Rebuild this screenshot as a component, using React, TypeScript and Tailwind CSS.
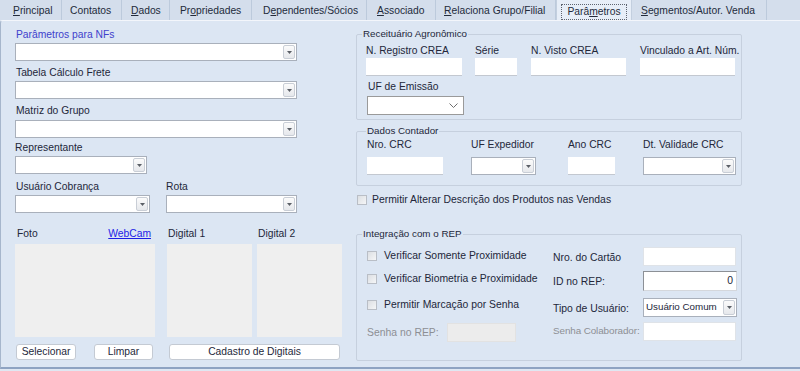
import React from 'react';

type Tab = { pre: string; mn?: string; post?: string; w: string; pl: string; active?: boolean };

const tabs: Tab[] = [
  { pre: '', mn: 'P', post: 'rincipal', w: 'w-[62px]', pl: 'pl-[13px]' },
  { pre: 'Contatos', w: 'w-[60px]', pl: 'pl-[8px]' },
  { pre: '', mn: 'D', post: 'ados', w: 'w-[48px]', pl: 'pl-[9px]' },
  { pre: 'Pr', mn: 'o', post: 'priedades', w: 'w-[82px]', pl: 'pl-[10px]' },
  { pre: 'D', mn: 'e', post: 'pendentes/Sócios', w: 'w-[115px]', pl: 'pl-[11px]' },
  { pre: '', mn: 'A', post: 'ssociado', w: 'w-[69px]', pl: 'pl-[10px]' },
  { pre: '', mn: 'R', post: 'elaciona Grupo/Filial', w: 'w-[120px]', pl: 'pl-[8px]' },
  { pre: 'Parâ', mn: 'm', post: 'etros', w: 'w-[76px]', pl: 'pl-[4px]', active: true },
  { pre: '', mn: 'S', post: 'egmentos/Autor. Venda', w: 'w-[135px]', pl: 'pl-[9px]' },
];

const TabLabel = ({ t }: { t: Tab }) => (
  <>
    {t.pre}
    {t.mn && <span className="underline underline-offset-[1px]">{t.mn}</span>}
    {t.post}
  </>
);

// botão do combo no estilo antigo (triângulo pequeno)
const DropBtn = () => (
  <div className="w-[12px] my-[1px] mr-[1px] flex items-center justify-center rounded-[2px] border border-[#c9ced6] bg-linear-to-b from-[#fbfbfb] to-[#e6e8ec]">
    <svg width="5" height="3" viewBox="0 0 5 3">
      <path d="M0 0 L5 0 L2.5 3 Z" fill="#5a5f66" />
    </svg>
  </div>
);

const Combo = ({ className, value }: { className: string; value?: string }) => (
  <div className={`flex bg-white border border-[#a9b0bb] ${className}`}>
    <div className="flex-1 pl-[2px] flex items-center whitespace-nowrap overflow-hidden">{value}</div>
    <DropBtn />
  </div>
);

const Label = ({ className = '', children }: { className?: string; children: React.ReactNode }) => (
  <div className={`h-[13px] leading-[13px] whitespace-nowrap ${className}`}>{children}</div>
);

const TextBox = ({ className }: { className: string }) => (
  <div className={`h-[18px] bg-white border-b border-[#c3c8d0] ${className}`} />
);

const Check = () => (
  <span className="w-[10px] h-[10px] shrink-0 border border-[#b9bec6] bg-linear-to-br from-[#dcdfe3] to-[#f5f6f7]" />
);

const Button = ({ className, children }: { className: string; children: React.ReactNode }) => (
  <div className={`h-[16px] flex items-center justify-center bg-white border border-[#c4cad3] rounded-[3px] ${className}`}>
    {children}
  </div>
);

export default function App() {
  return (
    <div className="w-[800px] h-[371px] overflow-hidden bg-[#dfe7f2] font-['Liberation_Sans',Arial,sans-serif] text-[10.3px] text-[#23273a]">
      {/* abas */}
      <div className="h-[20px] flex bg-[#d4deec] text-[#232b3b]">
        {tabs.map((t, i) =>
          t.active ? (
            <div key={i} className={`${t.w} h-[20px] bg-[#e7eef8] border-x border-[#c3cfdf] flex justify-center`}>
              <span className="mt-[4px] h-[16px] px-[5px] leading-[14px] border border-dotted border-[#5e6470]">
                <TabLabel t={t} />
              </span>
            </div>
          ) : (
            <div key={i} className={`${t.w} ${t.pl} h-[20px] flex items-center pt-[1px] border-r border-[#bccadc] whitespace-nowrap`}>
              <TabLabel t={t} />
            </div>
          )
        )}
      </div>

      {/* conteúdo */}
      <div className="h-[349px] flex bg-[#dce6f3] border-t border-t-[#f3f6fb] border-l border-l-[#a6b6cc] border-b-2 border-b-[#8ea3c2] rounded-tl-[3px]">
        {/* coluna esquerda */}
        <div className="w-[355px] pl-[14px] flex flex-col">
          <Label className="mt-[7px] pl-[1px] text-[#4141cc]">Parâmetros para NFs</Label>
          <Combo className="mt-[2px] w-[282px] h-[18px]" />
          <Label className="mt-[5px] pl-[1px]">Tabela Cálculo Frete</Label>
          <Combo className="mt-[2px] w-[282px] h-[18px]" />
          <Label className="mt-[5px] pl-[1px]">Matriz do Grupo</Label>
          <Combo className="mt-[3px] w-[282px] h-[18px]" />
          <Label className="mt-[3px]">Representante</Label>
          <Combo className="mt-[2px] w-[132px] h-[18px]" />

          <div className="mt-[6px] flex">
            <div className="w-[151px] flex flex-col">
              <Label className="pl-[1px]">Usuário Cobrança</Label>
              <Combo className="mt-[2px] w-[135px] h-[18px]" />
            </div>
            <div className="flex flex-col">
              <Label>Rota</Label>
              <Combo className="mt-[2px] w-[131px] h-[18px]" />
            </div>
          </div>

          <div className="mt-[14px] flex">
            <div className="w-[140px] flex flex-col">
              <div className="h-[13px] leading-[13px] flex justify-between pl-[2px] pr-[4px]">
                <span>Foto</span>
                <span className="text-[#1d1de6] underline">WebCam</span>
              </div>
              <div className="mt-[4px] h-[93px] bg-[#efefef]" />
            </div>
            <div className="ml-[12px] w-[85px] flex flex-col">
              <Label className="pl-[1px]">Digital 1</Label>
              <div className="mt-[4px] h-[93px] bg-[#efefef]" />
            </div>
            <div className="ml-[5px] w-[85px] flex flex-col">
              <Label className="pl-[1px]">Digital 2</Label>
              <div className="mt-[4px] h-[93px] bg-[#efefef]" />
            </div>
          </div>

          <div className="mt-[7px] flex">
            <Button className="ml-[1px] w-[60px]">Selecionar</Button>
            <Button className="ml-[18px] w-[59px]">Limpar</Button>
            <Button className="ml-[16px] w-[171px]">Cadastro de Digitais</Button>
          </div>
        </div>

        {/* coluna direita */}
        <div className="w-[386px] flex flex-col">
          <fieldset className="mt-[7px] border border-[#c6d0de] rounded-[2px] pb-[4px]">
            <legend className="ml-[5px] px-[1px] text-[9.8px] leading-[12px]">Receituário Agronômico</legend>
            <div className="mt-[4px] pl-[9px] flex">
              <div className="w-[96px] flex flex-col">
                <Label>N. Registro CREA</Label>
                <TextBox className="mt-[1px] w-[96px]" />
              </div>
              <div className="ml-[13px] w-[42px] flex flex-col">
                <Label>Série</Label>
                <TextBox className="mt-[1px] w-[42px]" />
              </div>
              <div className="ml-[14px] w-[95px] flex flex-col">
                <Label>N. Visto CREA</Label>
                <TextBox className="mt-[1px] w-[95px]" />
              </div>
              <div className="ml-[14px] w-[95px] flex flex-col">
                <Label>Vinculado a Art. Núm.</Label>
                <TextBox className="mt-[1px] w-[95px]" />
              </div>
            </div>
            <div className="mt-[4px] pl-[10px] flex flex-col">
              <Label className="pl-[1px]">UF de Emissão</Label>
              <div className="mt-[3px] w-[97px] h-[19px] bg-white border border-[#9a9a9a] flex items-center justify-end pr-[5px]">
                <svg width="9" height="5" viewBox="0 0 9 5">
                  <path d="M0.5 0.5 L4.5 4.5 L8.5 0.5" fill="none" stroke="#6e6e6e" strokeWidth="1" />
                </svg>
              </div>
            </div>
          </fieldset>

          <fieldset className="mt-[5px] border border-[#c6d0de] rounded-[2px] pb-[10px]">
            <legend className="ml-[9px] px-[1px] text-[9.8px] leading-[12px]">Dados Contador</legend>
            <div className="mt-[1px] pl-[10px] flex">
              <div className="w-[76px] flex flex-col">
                <Label>Nro. CRC</Label>
                <TextBox className="mt-[6px] w-[76px]" />
              </div>
              <div className="ml-[28px] w-[65px] flex flex-col">
                <Label>UF Expedidor</Label>
                <Combo className="mt-[6px] w-[65px] h-[18px]" />
              </div>
              <div className="ml-[32px] w-[47px] flex flex-col">
                <Label>Ano CRC</Label>
                <TextBox className="mt-[6px] w-[47px]" />
              </div>
              <div className="ml-[28px] w-[93px] flex flex-col">
                <Label>Dt. Validade CRC</Label>
                <Combo className="mt-[6px] w-[93px] h-[18px]" />
              </div>
            </div>
          </fieldset>

          <div className="mt-[8px] h-[12px] flex items-center pl-[1px] text-[10.4px]">
            <Check />
            <span className="ml-[5px]">Permitir Alterar Descrição dos Produtos nas Vendas</span>
          </div>

          <fieldset className="mt-[22px] border border-[#c6d0de] rounded-[2px] pb-[18px] text-[10.4px]">
            <legend className="ml-[5px] px-[1px] text-[9.8px] leading-[12px]">Integração com o REP</legend>
            <div className="pl-[10px] flex">
              <div className="w-[186px] flex flex-col">
                <div className="mt-[9px] h-[13px] flex items-center">
                  <Check />
                  <span className="ml-[7px]">Verificar Somente Proximidade</span>
                </div>
                <div className="mt-[10px] h-[13px] flex items-center">
                  <Check />
                  <span className="ml-[7px] whitespace-nowrap">Verificar Biometria e Proximidade</span>
                </div>
                <div className="mt-[13px] h-[13px] flex items-center">
                  <Check />
                  <span className="ml-[7px]">Permitir Marcação por Senha</span>
                </div>
                <div className="mt-[12px] h-[19px] flex items-center">
                  <span className="w-[80px] text-[#8d8f94]">Senha no REP:</span>
                  <div className="w-[69px] h-[19px] bg-[#ececec] border border-[#e2e2e2]" />
                </div>
              </div>
              <div className="flex flex-col">
                <div className="mt-[7px] h-[19px] flex items-center">
                  <span className="w-[90px] pt-[2px]">Nro. do Cartão</span>
                  <div className="w-[93px] h-[19px] bg-white border border-[#dfe3e8]" />
                </div>
                <div className="mt-[5px] h-[20px] flex items-center">
                  <span className="w-[90px] pt-[2px]">ID no REP:</span>
                  <div className="w-[94px] h-[20px] bg-white border border-[#8c9096] border-b-[#d4d7dc] border-r-[#d4d7dc] flex items-center justify-end pr-[3px]">
                    0
                  </div>
                </div>
                <div className="mt-[7px] h-[19px] flex items-center">
                  <span className="w-[90px] pt-[2px]">Tipo de Usuário:</span>
                  <Combo className="w-[94px] h-[19px] text-[9.8px]" value="Usuário Comum" />
                </div>
                <div className="mt-[5px] h-[19px] flex items-center">
                  <span className="w-[90px] whitespace-nowrap text-[9.9px] tracking-[-0.1px] text-[#8d8f94]">Senha Colaborador:</span>
                  <div className="w-[93px] h-[19px] bg-white border border-[#dfe3e8]" />
                </div>
              </div>
            </div>
          </fieldset>
        </div>
      </div>
    </div>
  );
}
